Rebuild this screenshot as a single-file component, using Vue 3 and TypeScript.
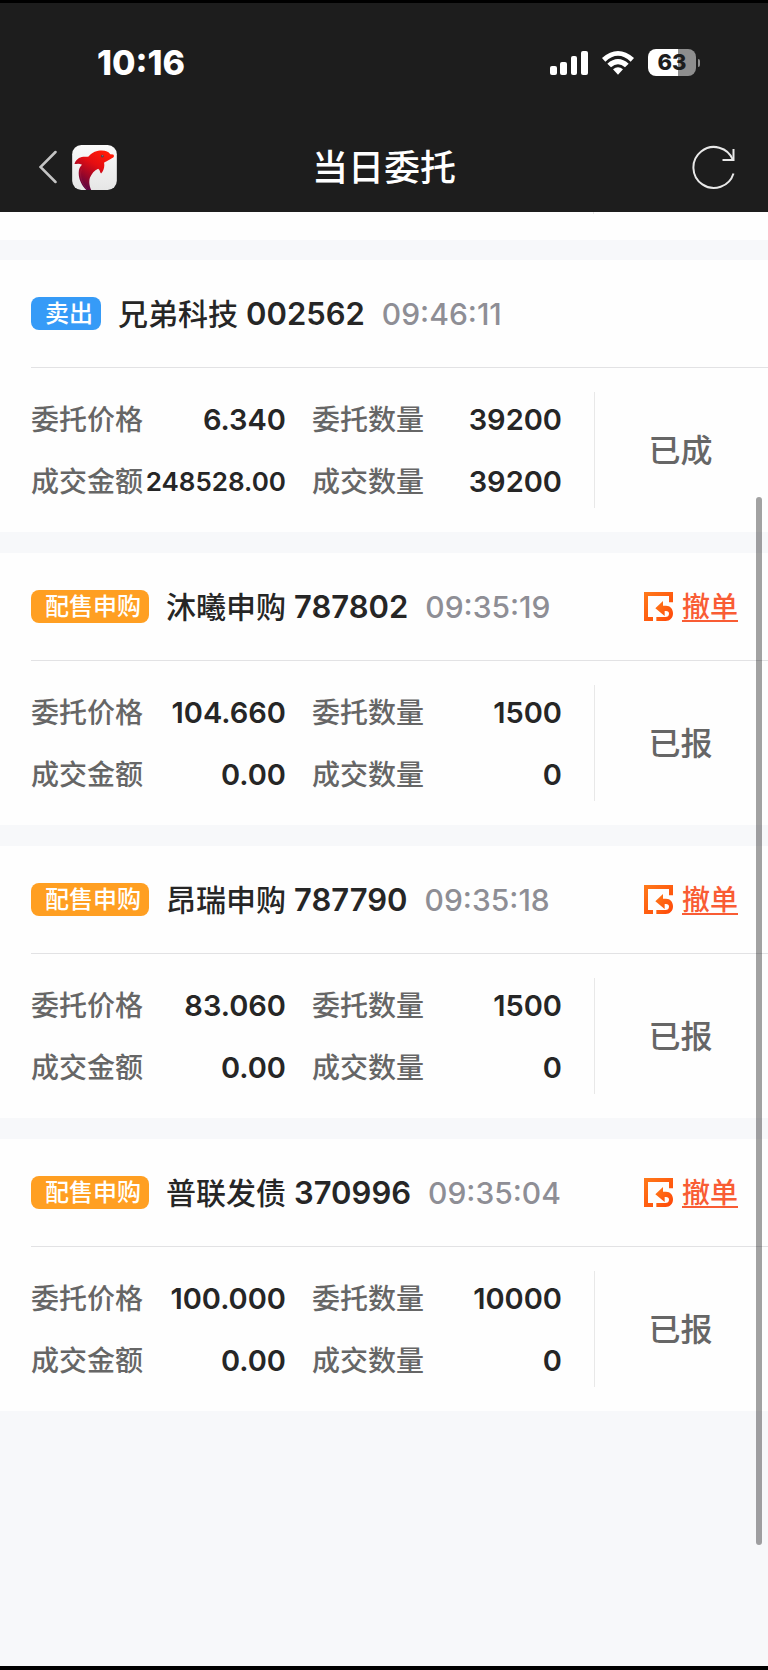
<script setup lang="ts">
interface Order {
  side: string
  kind: 'sell' | 'allot'
  name: string
  code: string
  time: string
  price: string
  quantity: string
  amount: string
  filled: string
  status: string
  revocable: boolean
}

const orders: Order[] = [
  { side: '卖出', kind: 'sell', name: '兄弟科技', code: '002562', time: '09:46:11', price: '6.340', quantity: '39200', amount: '248528.00', filled: '39200', status: '已成', revocable: false },
  { side: '配售申购', kind: 'allot', name: '沐曦申购', code: '787802', time: '09:35:19', price: '104.660', quantity: '1500', amount: '0.00', filled: '0', status: '已报', revocable: true },
  { side: '配售申购', kind: 'allot', name: '昂瑞申购', code: '787790', time: '09:35:18', price: '83.060', quantity: '1500', amount: '0.00', filled: '0', status: '已报', revocable: true },
  { side: '配售申购', kind: 'allot', name: '普联发债', code: '370996', time: '09:35:04', price: '100.000', quantity: '10000', amount: '0.00', filled: '0', status: '已报', revocable: true },
]
</script>

<template>
  <div class="page">
    <header class="header">
      <div class="statusbar">
        <time class="clock">10:16</time>
        <div class="indicators">
          <svg class="signal" viewBox="0 0 38 24" aria-hidden="true">
            <rect x="0" y="15" width="7" height="9" rx="2" />
            <rect x="10" y="11" width="7" height="13" rx="2" />
            <rect x="21" y="5" width="6" height="19" rx="2" />
            <rect x="31" y="0" width="7" height="24" rx="2" />
          </svg>
          <svg class="wifi" viewBox="0 0 96 72" aria-hidden="true">
            <path d="M0 21 Q48 -21 96 21 L86 32 Q48 -3 10 32 Z" />
            <path d="M16 38 Q48 10 80 38 L69 49 Q48 30 27 49 Z" />
            <path d="M33 55 Q48 43 63 55 L48 71 Z" />
          </svg>
          <div class="battery-wrap">
            <span class="battery">63</span>
            <span class="battery-cap"></span>
          </div>
        </div>
      </div>
      <nav class="nav">
        <button class="back" type="button" aria-label="返回">
          <svg class="chevron" viewBox="0 0 18 34" aria-hidden="true">
            <path d="M16.500 2 L1.500 17 L16.500 32" />
          </svg>
          <svg class="logo" viewBox="215 433 136 137" aria-hidden="true">
            <defs>
              <linearGradient id="tile" x1="0" y1="0" x2="0" y2="1">
                <stop offset="0" stop-color="#fafafa" />
                <stop offset="1" stop-color="#e6e6e6" />
              </linearGradient>
              <linearGradient id="body" gradientUnits="userSpaceOnUse" x1="312" y1="455" x2="245" y2="568">
                <stop offset="0" stop-color="#ff1a08" />
                <stop offset="0.35" stop-color="#e40d12" />
                <stop offset="0.7" stop-color="#95062a" />
                <stop offset="1" stop-color="#4c0448" />
              </linearGradient>
            </defs>
            <rect x="215" y="433" width="136" height="137" rx="28" fill="url(#tile)" />
            <path
              fill="url(#body)"
              d="M222 491 C226 478 236 470 249 469 C255 468 261 469 265 468 C275 455 291 450 305 450 C318 450 326 454 331 461 L340 462 C343 464 343 469 340 471 C334 473 330 478 324 480 C319 483 314 484 312 487 C315 500 310 513 303 520 C299 516 300 508 294 505 C283 509 274 520 269 533 C265 546 268 559 273 570 L258 570 C244 556 234 536 235 517 C235 506 239 498 245 493 C237 488 229 490 222 491 Z"
            />
            <path d="M243 507 C236 527 245 551 260 567" fill="none" stroke="#c83a55" stroke-opacity="0.4" stroke-width="2" />
            <circle cx="307" cy="467" r="4" fill="#54434a" />
            <circle cx="308" cy="466" r="1.500" fill="#b9a9b0" />
          </svg>
        </button>
        <h1 class="title">当日委托</h1>
        <button class="refresh" type="button" aria-label="刷新">
          <svg viewBox="0 0 44 46" aria-hidden="true">
            <path d="M41.500 29.500 A20.500 20.500 0 1 1 41 16" />
            <path d="M41.500 5 V16 H30.500" />
          </svg>
        </button>
      </nav>
    </header>

    <main class="list">
      <div class="previous"><div class="previous-edge"></div></div>
      <article v-for="order in orders" :key="order.code" class="card">
        <div class="card-head">
          <span class="tag" :class="order.kind">{{ order.side }}</span>
          <h2 class="name">{{ order.name }} <span class="code">{{ order.code }}</span></h2>
          <time class="time">{{ order.time }}</time>
          <button v-if="order.revocable" class="revoke" type="button">
            <svg viewBox="0 0 87 87" aria-hidden="true">
              <defs>
                <linearGradient :id="'rv' + order.code" x1="0" y1="0" x2="1" y2="1">
                  <stop offset="0" stop-color="#ff7a1a" />
                  <stop offset="1" stop-color="#ff4408" />
                </linearGradient>
              </defs>
              <g :fill="`url(#rv${order.code})`">
                <path d="M0 0 H87 V31 H75 V12 H12 V75 H27 V87 H0 Z" />
                <path d="M34 49 L57 27 V41 H66 C79 41 87 51 87 64 C87 78 78 87 65 87 H37 V75 H64 C71 75 75 71 75 65 C75 60 72 57 66 57 H62 V72 Z" />
              </g>
            </svg>
            <span>撤单</span>
          </button>
        </div>
        <div class="card-body">
          <dl class="fields">
            <div class="field"><dt>委托价格</dt><dd>{{ order.price }}</dd></div>
            <div class="field"><dt>委托数量</dt><dd>{{ order.quantity }}</dd></div>
            <div class="field">
              <dt>成交金额</dt>
              <dd :class="{ compact: order.amount.length > 8 }">{{ order.amount }}</dd>
            </div>
            <div class="field"><dt>成交数量</dt><dd>{{ order.filled }}</dd></div>
          </dl>
          <div class="status">{{ order.status }}</div>
        </div>
      </article>
    </main>
    <div class="scroll-thumb" aria-hidden="true"></div>
  </div>
</template>

<style>
body {
  margin: 0;
}
</style>

<style scoped>
.page {
  position: relative;
  box-sizing: border-box;
  min-height: 100vh;
  border-top: 3px solid #000;
  border-bottom: 4px solid #000;
  background: #f7f8fa;
  color: #262626;
  font-family: Inter, "Noto Sans CJK SC", sans-serif;
}
button {
  display: flex;
  align-items: center;
  border: 0;
  padding: 0;
  background: none;
  color: inherit;
  font: inherit;
  cursor: pointer;
}
svg {
  display: block;
}
.header {
  background: #1d1d1d;
  color: #fff;
}
.statusbar {
  display: flex;
  align-items: center;
  justify-content: space-between;
  height: 119px;
  padding: 0 68px 0 97px;
}
.clock {
  font-size: 34px;
  font-weight: 800;
}
.indicators {
  display: flex;
  align-items: center;
  gap: 14px;
}
.signal {
  width: 38px;
  height: 24px;
  fill: #fff;
}
.wifi {
  width: 32px;
  height: 24px;
  fill: #fff;
}
.battery-wrap {
  display: flex;
  align-items: center;
  gap: 2px;
}
.battery {
  width: 48px;
  height: 27px;
  border-radius: 8px;
  background: linear-gradient(90deg, #fff 63%, #8e8e8e 63%);
  color: #1d1d1d;
  font-size: 22px;
  font-weight: 800;
  line-height: 27px;
  text-align: center;
}
.battery-cap {
  width: 2px;
  height: 8px;
  border-radius: 0 2px 2px 0;
  background: #8e8e8e;
}
.nav {
  display: grid;
  grid-template-columns: 1fr auto 1fr;
  align-items: center;
  height: 90px;
  padding: 0 32px;
}
.back {
  gap: 15px;
  justify-self: start;
  padding-left: 7px;
}
.chevron {
  width: 18px;
  height: 34px;
  fill: none;
  stroke: #c4c4c4;
  stroke-width: 2.500;
  stroke-linecap: round;
}
.logo {
  width: 45px;
  height: 45px;
}
.title {
  margin: 0;
  padding-top: 2px;
  font-size: 36px;
  font-weight: 500;
  line-height: 48px;
}
.refresh {
  justify-self: end;
}
.refresh svg {
  width: 44px;
  height: 46px;
  fill: none;
  stroke: #e8e8e8;
  stroke-width: 2;
}
.list {
  display: flex;
  flex-direction: column;
  gap: 21px;
}
.previous {
  display: flex;
  justify-content: flex-end;
  height: 28px;
  margin-bottom: -1px;
  background: #fefefe;
}
.previous-edge {
  width: 174px;
  height: 2px;
  border-left: 1px solid #e8e8e8;
}
.card {
  padding-left: 31px;
  background: #fefefe;
}
.card-head {
  display: flex;
  align-items: center;
  height: 107px;
  padding-right: 30px;
  border-bottom: 1px solid #e2e2e4;
}
.tag {
  padding: 0 8px 0 14px;
  border-radius: 8px;
  color: #fff;
  font-size: 24px;
  font-weight: 500;
  line-height: 33px;
}
.tag.sell {
  background: #369bf7;
}
.tag.allot {
  background: #ff9f22;
}
.name {
  margin: 0 17px;
  font-size: 30px;
  font-weight: 500;
  line-height: 40px;
}
.code {
  font-size: 31px;
  font-weight: 600;
}
.time {
  color: #8e8e95;
  font-size: 30px;
  font-weight: 500;
}
.revoke {
  gap: 9px;
  margin-left: auto;
  color: #f95c34;
  font-size: 28px;
  font-weight: 500;
}
.revoke svg {
  width: 29px;
  height: 29px;
}
.revoke span {
  line-height: 36px;
  text-decoration: underline;
  text-decoration-thickness: 2px;
  text-underline-offset: 3px;
}
.card-body {
  display: flex;
  padding: 24px 0;
}
.fields {
  flex: 1;
  display: grid;
  grid-template-columns: 255fr 250fr;
  column-gap: 26px;
  row-gap: 22px;
  align-content: center;
  margin: 0;
  padding-right: 32px;
}
.field {
  display: flex;
  align-items: center;
  justify-content: space-between;
  height: 40px;
  white-space: nowrap;
}
.field dt {
  padding-bottom: 2px;
  color: #666;
  font-size: 28px;
  font-weight: 500;
}
.field dd {
  margin: 0;
  font-size: 29px;
  font-weight: 600;
}
.field dd.compact {
  font-size: 26px;
}
.status {
  display: flex;
  align-items: center;
  justify-content: center;
  box-sizing: border-box;
  width: 174px;
  height: 116px;
  padding: 0 2px 4px 0;
  border-left: 1px solid #e8e8e8;
  color: #666;
  font-size: 32px;
  font-weight: 500;
}
.scroll-thumb {
  position: absolute;
  top: 494px;
  right: 6px;
  bottom: 121px;
  width: 6px;
  border-radius: 3px;
  background: rgba(0, 0, 0, 0.36);
}
</style>
